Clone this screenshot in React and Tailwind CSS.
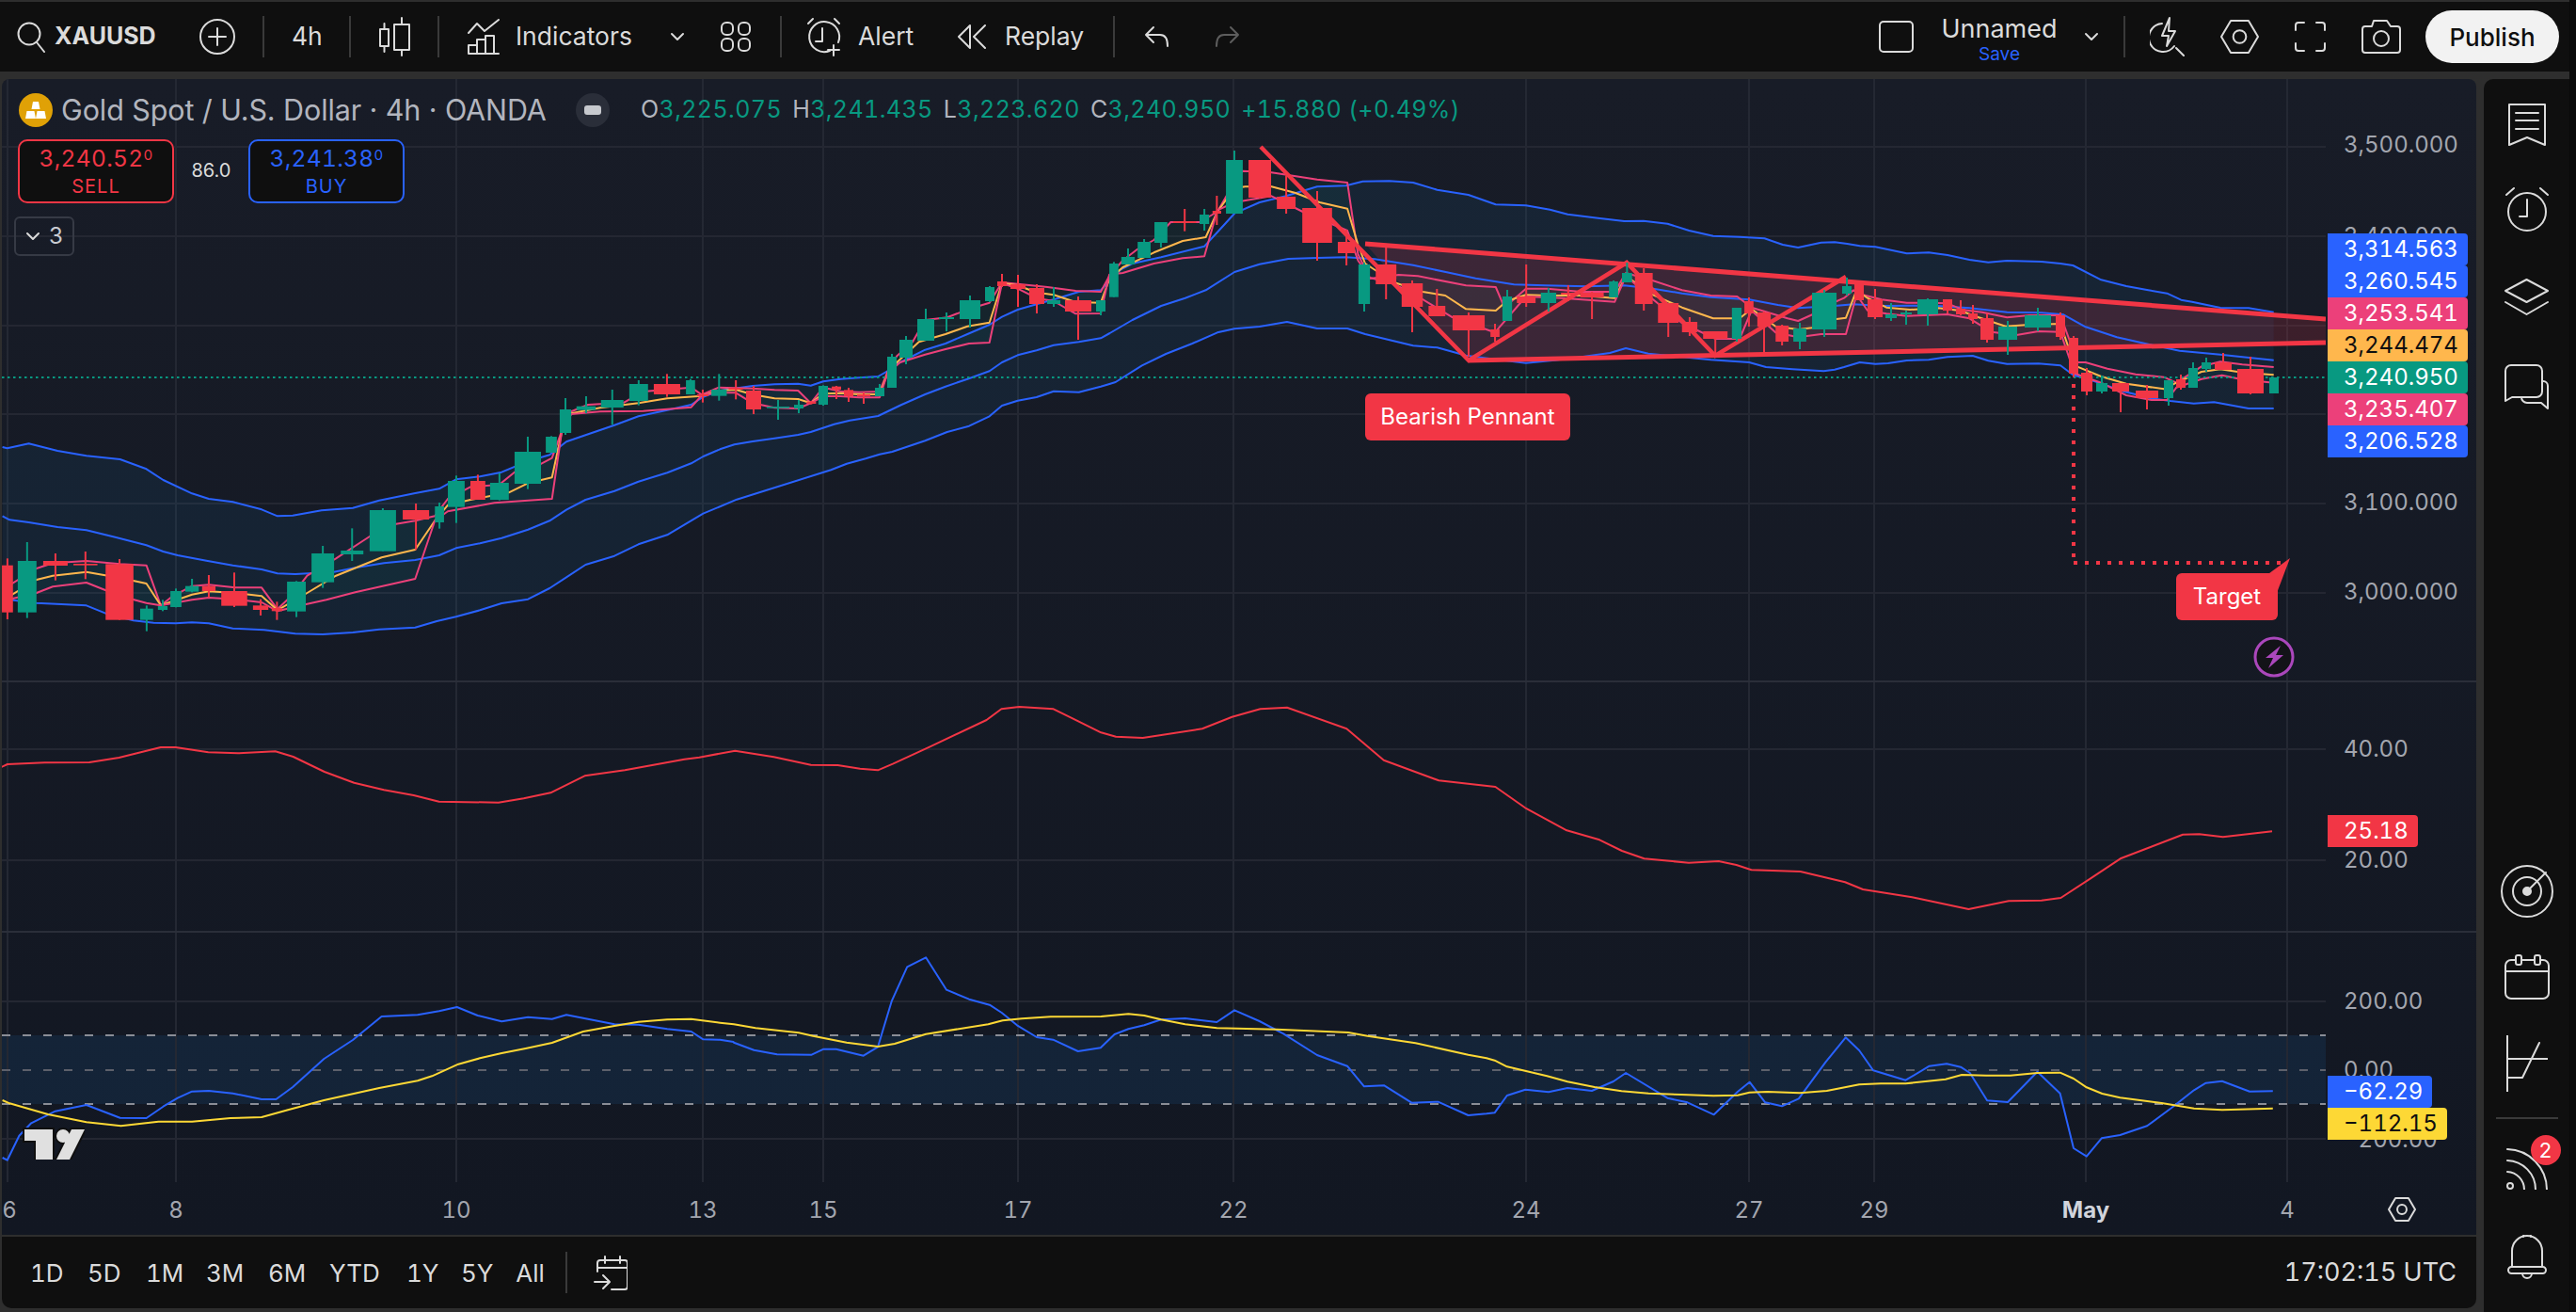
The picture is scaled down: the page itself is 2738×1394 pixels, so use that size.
import React from "react";

const seg = (ox, oy, sx, sy, lo = -1e9, hi = 1e9) => (pts) =>
  pts.map(([x, y]) => [ox + x / sx, oy + y / sy]).filter(([X]) => X >= lo && X < hi);
const z7 = seg(0, 380, 1.96, 3, -1e9, 790);
const z9 = seg(780, 260, 3, 3, 790, 1176);
const z6 = seg(1150, 130, 1.96, 3, 1176, 1945);
const z8 = seg(1950, 250, 3, 3, 1945);
const join4 = (a, b, c, d) => [...z7(a), ...z9(b), ...z6(c), ...z8(d)];
const P = (pts) => pts.map(([x, y]) => `${x.toFixed(1)},${y.toFixed(1)}`).join(" ");

const top = join4(
  [[5,285],[15,289],[60,274],[120,297],[180,313],[250,324],[305,355],[340,390],[400,433],[435,450],[485,460],[545,484],[578,505],[610,503],[670,487],[735,479],[790,455],[865,432],[915,418],[950,388],[1000,379],[1045,365],[1100,330],[1145,310],[1180,268],[1220,247],[1280,215],[1330,187],[1390,167],[1440,150],[1465,125],[1500,105],[1568,93]],
  [[60,450],[130,445],[205,443],[245,449],[285,436],[340,428],[400,424],[460,420],[495,400],[520,380],[560,360],[610,335],[675,315],[745,285],[815,255],[855,230],[905,207],[965,190],[1030,172],[1100,150],[1170,145],[1200,115]],
  [[57,505],[80,470],[105,450],[165,430],[255,395],[282,350],[318,290],[370,255],[425,235],[490,205],[550,202],[585,188],[640,187],[690,192],[740,215],[805,231],[862,262],[925,265],[975,278],[1012,293],[1075,305],[1130,315],[1170,314],[1220,323],[1265,345],[1315,362],[1370,365],[1422,370],[1460,390],[1492,399],[1540,383],[1568,383]],
  [[0,22],[40,27],[80,34],[130,37],[230,58],[300,55],[360,63],[430,78],[490,86],[550,81],[660,84],[720,90],[760,96],[850,142],[930,162],[1000,175],[1060,185],[1105,206],[1140,212],[1230,231],[1320,232],[1400,245]]
);
const mid = join4(
  [[5,505],[20,517],[60,525],[120,540],[180,550],[240,572],[305,598],[340,618],[370,630],[430,647],[485,662],[545,675],[578,688],[615,690],[695,683],[740,670],[800,655],[865,645],[915,630],[950,607],[1000,592],[1045,575],[1100,548],[1145,520],[1180,485],[1220,453],[1280,425],[1330,395],[1390,367],[1440,337],[1465,315],[1500,292],[1530,277],[1568,267]],
  [[60,627],[130,617],[205,606],[245,597],[320,572],[370,560],[460,546],[535,510],[610,477],[675,452],[745,428],[815,403],[855,375],[905,352],[965,337],[1020,320],[1100,310],[1170,298],[1200,282]],
  [[58,672],[105,630],[165,585],[215,560],[258,535],[318,477],[370,452],[430,435],[490,432],[550,430],[610,436],[690,455],[760,478],[820,497],[900,517],[965,520],[1050,523],[1130,520],[1190,530],[1250,545],[1310,557],[1390,565],[1450,582],[1492,592],[1568,590]],
  [[0,225],[60,220],[150,225],[250,224],[340,226],[430,232],[550,245],[660,247],[730,253],[800,292],[900,325],[1000,347],[1100,368],[1230,380],[1300,388],[1400,398]]
);
const bot = join4(
  [[5,772],[20,772],[76,782],[180,790],[220,815],[278,838],[320,845],[366,847],[400,844],[435,847],[485,863],[550,868],[615,880],[672,882],[735,876],[790,866],[865,860],[910,840],[950,826],[1000,805],[1045,783],[1100,770],[1145,735],[1180,700],[1220,660],[1280,632],[1330,595],[1390,565],[1465,497],[1535,452],[1568,442]],
  [[310,718],[360,698],[420,682],[465,668],[505,660],[610,625],[680,597],[750,578],[815,547],[855,513],[905,497],[965,486],[1020,467],[1100,470],[1170,452],[1200,442]],
  [[59,833],[70,828],[125,775],[175,738],[230,705],[282,670],[318,658],[370,651],[427,636],[490,657],[553,657],[590,675],[690,712],[740,718],[800,743],[860,755],[925,767],[985,758],[1040,748],[1100,735],[1133,720],[1180,737],[1250,748],[1310,757],[1390,765],[1425,780],[1480,787],[1545,793],[1568,785]],
  [[0,428],[30,420],[80,405],[130,410],[170,408],[230,399],[300,397],[360,388],[440,384],[490,400],[550,410],[650,409],[720,415],[760,445],[830,466],[920,497],[1010,520],[1070,528],[1145,536],[1210,532],[1320,552],[1400,552]]
);
const bandTop = top.filter(([X]) => X < 2417.5);
const bandBot = bot.filter(([X]) => X < 2417.5);
const pinkU = join4(
  [[20,725],[76,672],[110,655],[180,648],[250,658],[305,662],[335,790],[360,760],[400,728],[435,724],[490,733],[545,733],[578,802],[610,755],[640,695],[700,640],[770,570],[825,530],[865,520],[906,505],[933,450],[980,412],[1040,405],[1072,365],[1125,340],[1150,320],[1170,235],[1190,172],[1225,150],[1300,143],[1340,108],[1440,95],[1462,118],[1497,95],[1533,97]],
  [[60,458],[130,463],[205,465],[245,505],[285,455],[340,467],[400,470],[465,468],[490,405],[520,355],[570,310],[610,240],[680,232],[750,205],[815,185],[855,120],[905,125],[1000,135],[1090,147],[1170,150],[1200,110]],
  [[57,490],[85,440],[115,405],[150,375],[185,318],[245,318],[282,285],[318,190],[335,155],[395,160],[490,182],[553,192],[575,420],[600,498],[660,486],[700,490],[800,520],[862,525],[880,590],[925,530],[970,530],[1040,540],[1110,540],[1133,480],[1190,505],[1250,535],[1310,552],[1365,555],[1395,590],[1470,625],[1492,633],[1540,600]],
  [[0,213],[30,200],[60,175],[90,190],[150,205],[230,215],[300,215],[360,217],[410,238],[470,245],[550,262],[620,255],[720,255],[775,405],[800,405],[870,425],[960,443],[1050,452],[1090,470],[1170,418],[1230,403],[1300,412],[1400,420]]
);
const orange = join4(
  [[20,760],[76,708],[110,695],[180,683],[250,702],[305,720],[335,790],[400,755],[435,745],[490,750],[545,760],[578,805],[640,750],[700,695],[795,637],[865,612],[906,520],[933,470],[980,453],[1060,430],[1100,400],[1150,382],[1170,240],[1190,178],[1250,160],[1330,145],[1390,130],[1462,122],[1497,105],[1533,102]],
  [[60,478],[130,490],[205,492],[245,505],[285,475],[340,473],[400,477],[465,477],[490,410],[520,375],[590,310],[675,285],[745,260],[815,248],[855,122],[905,130],[965,152],[1020,160],[1090,183],[1170,185],[1200,130]],
  [[57,500],[85,462],[150,415],[210,378],[258,366],[282,285],[318,210],[340,205],[395,205],[445,225],[495,255],[553,275],[575,390],[590,450],[650,510],[710,540],[757,552],[800,595],[862,600],[885,570],[925,550],[970,552],[1040,552],[1110,560],[1133,490],[1190,550],[1250,590],[1315,625],[1370,625],[1395,595],[1445,650],[1492,660],[1521,655]],
  [[0,268],[36,263],[70,175],[105,200],[165,230],[240,237],[330,232],[400,240],[460,262],[545,290],[620,285],[720,282],[765,415],[850,450],[930,473],[1050,490],[1090,470],[1170,435],[1230,427],[1300,437],[1400,445]]
);
const pinkL = join4(
  [[20,770],[76,750],[110,730],[180,717],[250,760],[305,782],[335,790],[400,772],[435,765],[490,770],[545,780],[578,808],[640,785],[680,772],[740,748],[865,705],[906,520],[933,490],[1030,463],[1150,450],[1170,240],[1190,180],[1250,172],[1340,170],[1440,158],[1462,120],[1497,112],[1533,112]],
  [[60,505],[130,520],[205,522],[245,505],[285,483],[340,483],[400,487],[465,487],[490,410],[530,375],[610,350],[675,333],[750,315],[815,312],[855,122],[905,140],[965,170],[1020,180],[1090,220],[1170,219],[1200,150]],
  [[57,485],[85,480],[150,450],[210,433],[255,427],[282,280],[318,255],[395,235],[460,285],[553,345],[575,440],[600,495],[650,515],[700,555],[770,620],[860,670],[925,555],[1000,560],[1110,572],[1133,490],[1190,565],[1250,640],[1320,690],[1370,690],[1395,600],[1445,670],[1492,685],[1540,675]],
  [[0,315],[36,315],[70,190],[105,240],[165,250],[230,257],[360,252],[430,265],[500,308],[580,318],[650,306],[720,308],[765,440],[850,470],[930,510],[1010,525],[1060,525],[1090,485],[1170,458],[1235,446],[1300,460],[1400,470]]
);

const mapC = (ox, oy, sx, sy, list) =>
  list.map(([a, b, t, bt, wt, wb, c]) => ({
    x: ox + a / sx, w: (b - a) / sx, t: oy + t / sy, h: (bt - t) / sy,
    cx: ox + (a + b) / 2 / sx, wt: oy + wt / sy, wb: oy + wb / sy, c,
  }));
const G = "#089981", R = "#f23645";
const candles = [
  ...mapC(0, 380, 1.96, 3, [
    [4,27,662,812,640,834,R],[37,76,648,812,588,830,G],[90,141,648,663,624,710,R],[153,203,657,662,618,706,R],
    [220,278,658,836,642,836,R],[292,319,800,836,790,872,G],[329,349,792,804,772,808,G],[355,378,744,795,736,796,G],
    [386,414,728,746,705,748,G],[421,449,728,744,693,765,R],[461,515,744,791,685,795,R],[527,559,790,804,770,822,R],
    [566,588,798,808,778,836,R],[598,637,714,809,712,827,G],[649,696,624,716,600,734,G],[710,757,615,627,544,648,G],
    [770,825,486,617,480,617,G],[839,894,486,516,465,613,R],[906,925,474,525,462,545,G],[933,968,393,476,376,527,G],
    [980,1011,393,453,373,453,R],[1021,1060,399,453,368,455,G],[1072,1127,300,402,252,419,G],[1137,1160,252,303,250,303,G],
    [1166,1190,165,240,129,246,G],[1201,1241,155,167,123,177,G],[1252,1299,135,159,102,214,G],[1311,1350,84,138,72,152,G],
    [1362,1417,84,117,52,125,R],[1429,1448,72,117,68,117,G],[1452,1476,117,123,102,143,R],[1482,1514,102,122,52,137,G],
    [1518,1548,96,102,72,133,R],
  ]),
  ...mapC(780, 260, 3, 3, [
    [39,87,465,525,450,540,R],[105,177,516,521,495,558,G],[192,222,510,522,495,537,G],[232,262,500,507,498,509,R],
    [270,300,450,510,448,513,G],[312,342,452,462,450,492,R],[351,381,463,483,456,501,R],[393,435,477,483,470,507,R],
    [450,480,456,483,444,483,G],[489,519,357,456,348,456,G],[528,570,303,360,291,381,G],[585,639,237,306,204,306,G],
    [654,702,231,237,216,276,G],[720,786,177,237,162,264,G],[801,831,135,180,132,183,G],[840,870,117,132,93,135,R],
    [882,930,126,141,96,198,R],[942,990,138,189,126,219,R],[999,1041,177,189,135,198,G],[1056,1140,177,213,165,303,R],
    [1155,1185,177,213,177,225,G],
  ]),
  ...mapC(1150, 130, 1.96, 3, [
    [57,76,450,557,445,557,G],[82,110,429,453,402,453,G],[116,143,381,432,372,432,G],[151,178,318,384,318,399,G],
    [190,238,315,321,276,347,R],[245,265,294,324,276,345,G],[272,290,282,291,234,327,R],[300,335,120,291,90,291,G],
    [347,394,120,240,120,243,R],[406,445,237,276,170,291,R],[459,521,273,384,219,441,R],[533,569,381,417,342,456,R],
    [576,600,453,579,447,603,G],[612,655,453,516,399,564,R],[666,710,513,588,504,669,R],[722,757,585,618,531,618,R],
    [772,839,615,663,606,747,R],[851,870,660,684,642,699,R],[876,896,555,633,534,633,G],[906,945,555,576,453,588,R],
    [956,988,543,576,528,603,G],[998,1028,543,549,519,570,R],[1038,1087,543,558,540,627,R],[1098,1117,507,558,504,558,G],
    [1125,1146,480,510,447,510,G],[1152,1189,480,579,465,600,R],[1200,1243,576,639,576,684,R],[1250,1282,636,669,621,681,R],
    [1294,1345,666,690,666,738,R],[1354,1374,591,690,591,699,G],[1380,1399,570,609,558,651,R],[1407,1435,606,651,603,735,R],
    [1445,1472,648,699,645,711,R],[1482,1509,657,699,639,723,G],[1521,1572,543,660,534,684,G],
  ]),
  ...mapC(1950, 250, 3, 3, [
    [24,54,162,186,135,192,G],[63,93,153,207,150,207,R],[105,153,204,261,171,267,R],[162,198,252,264,216,273,G],
    [210,246,246,252,240,285,G],[264,330,204,252,201,288,G],[345,375,204,240,204,249,R],[387,417,234,252,207,255,R],
    [426,456,249,267,222,282,R],[465,507,264,333,249,342,R],[522,582,291,333,273,381,G],[606,690,255,294,231,306,G],
    [705,735,255,324,246,333,R],[747,777,327,441,321,453,R],[786,822,438,498,423,510,R],[834,870,471,498,447,504,G],
    [885,939,471,498,471,564,R],[960,1032,495,519,477,555,R],[1050,1080,462,519,462,543,G],[1089,1119,459,486,444,492,R],
    [1128,1158,423,486,405,486,G],[1170,1200,405,426,390,435,G],[1212,1266,405,429,375,429,R],[1284,1368,426,504,387,507,R],
    [1386,1416,453,504,453,504,G],
  ]),
];

const rsi = [[0,257],[5,246],[30,241],[60,240],[80,225],[108,192],[118,192],[140,208],[160,211],[185,205],[197,222],[218,270],[238,305],[258,328],[278,345],[295,365],[335,368],[352,355],[370,337],[393,283],[420,265],[460,230],[470,224],[494,203],[520,223],[545,248],[563,249],[578,260],[590,265],[600,245],[625,190],[663,105],[673,70],[685,63],[708,70],[740,145],[750,158],[768,162],[808,133],[828,95],[847,70],[865,65],[905,133],[930,233],[967,298],[1005,318],[1025,385],[1053,457],[1075,487],[1090,522],[1105,547],[1135,560],[1155,555],[1167,567],[1177,583],[1210,588],[1240,622],[1252,645],[1285,670],[1323,708],[1350,682],[1372,680],[1385,672],[1405,610],[1425,547],[1467,470],[1478,469],[1494,478],[1527,460]]
  .map(([x, y]) => [x / 0.6323, 730 + y / 3]);

const c5 = seg(0, 1060, 1.96, 3, -1e9, 780);
const c11 = seg(780, 1000, 1.96, 3, 780, 1580);
const c12 = seg(1580, 1060, 1.742, 3, 1580);
const cciBlue = [
  ...c5([[5,510],[15,518],[40,440],[65,400],[115,362],[180,342],[250,383],[305,384],[340,347],[370,320],[400,299],[435,297],[485,305],[545,324],[575,324],[610,285],[675,195],[735,135],[795,60],[870,55],[915,43],[952,30],[995,57],[1045,76],[1100,62],[1150,68],[1180,55],[1280,85],[1330,86],[1390,100],[1440,108],[1465,133],[1500,134],[1528,141]]),
  ...c11([[0,323],[42,347],[90,361],[162,362],[187,344],[213,344],[270,365],[300,337],[329,190],[361,82],[400,52],[443,155],[490,185],[533,203],[558,228],[590,268],[631,306],[665,314],[717,351],[764,340],[793,297],[822,280],[855,268],[890,250],[940,246],[1006,258],[1043,220],[1095,255],[1145,295],[1215,363],[1278,398],[1313,463],[1355,460],[1412,515],[1467,512],[1530,555]]),
  ...c12([[0,370],[15,367],[38,312],[72,293],[115,301],[150,288],[195,297],[235,267],[258,240],[335,320],[372,334],[421,373],[465,300],[487,269],[516,334],[547,346],[578,322],[628,205],[665,127],[690,168],[716,232],[776,263],[820,218],[852,211],[878,221],[895,240],[927,328],[965,333],[1020,236],[1062,305],[1087,480],[1111,506],[1139,448],[1173,438],[1223,409],[1268,352],[1310,295],[1332,272],[1362,266],[1413,299],[1456,298]]),
];
const cciYellow = [
  ...c5([[5,327],[20,337],[100,372],[180,397],[252,409],[330,395],[400,395],[480,384],[545,381],[600,358],[675,327],[790,288],[870,265],[900,250],[955,212],[1000,193],[1045,177],[1095,162],[1150,144],[1215,108],[1280,90],[1330,77],[1390,70],[1440,68],[1500,80]]),
  ...c11([[0,265],[45,277],[135,292],[165,302],[235,323],[300,336],[335,327],[400,296],[530,265],[560,253],[600,247],[660,241],[765,240],[822,232],[855,237],[890,250],[940,265],[1006,277],[1130,281],[1280,291],[1320,302],[1420,325],[1530,362]]),
  ...c12([[0,193],[15,200],[38,220],[112,250],[150,268],[200,285],[250,298],[300,305],[360,309],[420,313],[465,311],[487,302],[520,300],[580,304],[630,297],[690,277],[730,274],[776,274],[850,260],[880,246],[925,248],[970,248],[1020,240],[1062,239],[1087,258],[1111,286],[1140,306],[1173,319],[1250,336],[1310,353],[1362,358],[1456,353]]),
];

const vGrid = [8, 187, 485, 747, 875, 1082, 1311, 1622, 1859, 1992, 2217, 2431];
const VLines = ({ y1, y2 }) =>
  vGrid.map((x) => <line key={x} x1={x} x2={x} y1={y1} y2={y2} stroke="#242833" strokeWidth="2" />);
const HLine = ({ y }) => <line x1="2" x2="2472" y1={y} y2={y} stroke="#242732" strokeWidth="2" />;
const Poly = ({ pts, color, w = 2 }) => (
  <polyline points={P(pts)} fill="none" stroke={color} strokeWidth={w} strokeLinejoin="round" />
);

const Ic = ({ w, h, children, className = "" }) => (
  <svg width={w} height={h} viewBox={`0 0 ${w} ${h}`} fill="none" stroke="#dbdbdb" strokeWidth="2" strokeLinecap="round" strokeLinejoin="round" className={`shrink-0 ${className}`}>
    {children}
  </svg>
);
const Sep = ({ className }) => <div className={`w-[2px] h-[44px] bg-[#3a3a3a] shrink-0 ${className}`} />;
const Chevron = ({ className }) => (
  <Ic w={16} h={10} className={className}><path d="M2 2l6 6 6-6" /></Ic>
);
const Hex = ({ w, h }) => (
  <Ic w={w} h={h}>
    <polygon points={`1,${h / 2} ${w * 0.27},1 ${w * 0.73},1 ${w - 1},${h / 2} ${w * 0.73},${h - 1} ${w * 0.27},${h - 1}`} />
    <circle cx={w / 2} cy={h / 2} r={h * 0.19} />
  </Ic>
);

function TopBar() {
  return (
    <div className="h-[74px] mt-[2px] bg-[#0f0f0f] flex items-center pl-[18px] pr-[11px] text-[#dbdbdb] text-[26.5px]">
      <Ic w={30} h={34}><circle cx="13" cy="14" r="11.5" /><path d="M21 23l8 10" /></Ic>
      <div className="ml-[10px] w-[118px] font-bold text-[25px] whitespace-nowrap">XAUUSD</div>
      <Ic w={38} h={38} className="ml-[36px]"><circle cx="19" cy="19" r="18" /><path d="M19 10v18M10 19h18" /></Ic>
      <Sep className="ml-[29px]" />
      <div className="ml-[29px] w-[31px] whitespace-nowrap">4h</div>
      <Sep className="ml-[30px]" />
      <Ic w={33} h={42} className="ml-[30px]">
        <rect x="1" y="13" width="9" height="18" /><path d="M5.5 7v6M5.5 31v6" />
        <rect x="16" y="8" width="16" height="27" /><path d="M24 1v7M24 35v6" />
      </Ic>
      <Sep className="ml-[29px]" />
      <Ic w={34} h={38} className="ml-[30px]">
        <path d="M1 15L10 5l8 8L33 1" />
        <path d="M1 37V28h9v9M10 37V22h9v15M19 37V18h9v19M1 37h32" />
      </Ic>
      <div className="ml-[17px] w-[127px] whitespace-nowrap">Indicators</div>
      <Chevron className="ml-[37px]" />
      <Ic w={32} h={32} className="ml-[38px]">
        <rect x="1" y="1" width="12" height="13" rx="5" /><rect x="19" y="1" width="12" height="13" rx="5" />
        <rect x="1" y="18" width="12" height="13" rx="5" /><rect x="19" y="18" width="12" height="13" rx="5" />
      </Ic>
      <Sep className="ml-[31px]" />
      <Ic w={39} h={42} className="ml-[25px]">
        <path d="M26 36a16 16 0 1 1 9-9" /><path d="M18 12v14h-7" /><path d="M3 7l5-5M31 2l5 5" /><path d="M30 30v11M24 35h12" />
      </Ic>
      <div className="ml-[17px] w-[60px] whitespace-nowrap">Alert</div>
      <Ic w={30} h={28} className="ml-[46px]">
        <path d="M13 2L1 14l12 12zM29 2L17 14l12 12" />
      </Ic>
      <div className="ml-[20px] w-[85px] whitespace-nowrap">Replay</div>
      <Sep className="ml-[30px]" />
      <Ic w={27} h={24} className="ml-[31px]"><path d="M10 2L2 10l8 8M2 10h15c6 0 8 5 8 12" /></Ic>
      <svg width="26" height="24" viewBox="0 0 26 24" fill="none" stroke="#5d5d5d" strokeWidth="2" strokeLinecap="round" strokeLinejoin="round" className="ml-[49px] shrink-0"><path d="M16 2l8 8-8 8M24 10H9c-6 0-8 5-8 12" /></svg>
      <div className="flex-1" />
      <div className="w-[37px] h-[34px] rounded-[5px] border-2 border-[#dbdbdb] shrink-0" />
      <div className="ml-[29px] w-[124px] flex flex-col items-center leading-none">
        <div className="whitespace-nowrap text-[27px] mt-[5px]">Unnamed</div>
        <div className="text-[19px] text-[#2962ff] mt-[4px]">Save</div>
      </div>
      <Chevron className="ml-[28px]" />
      <Sep className="ml-[26px]" />
      <Ic w={37} h={42} className="ml-[26px]">
        <path d="M13 7a15 15 0 1 0 13 24M28 33l8 8" /><path d="M21 1L13 20h7l-2 11 9-16h-7z" />
      </Ic>
      <div className="ml-[38px] shrink-0"><Hex w={41} h={36} /></div>
      <Ic w={33} h={32} className="ml-[38px]">
        <path d="M1 9V4a3 3 0 0 1 3-3h6M23 1h6a3 3 0 0 1 3 3v5M32 23v5a3 3 0 0 1-3 3h-6M10 31H4a3 3 0 0 1-3-3v-5" />
      </Ic>
      <Ic w={42} h={36} className="ml-[38px]">
        <path d="M1 10a3 3 0 0 1 3-3h7l2-6h14l4 6h7a3 3 0 0 1 3 3v22a3 3 0 0 1-3 3H4a3 3 0 0 1-3-3z" />
        <circle cx="21" cy="20" r="8" />
      </Ic>
      <div className="ml-[26px] w-[142px] h-[56px] rounded-full bg-[#f2f2f2] text-[#0f0f0f] flex items-center justify-center text-[26px] font-medium">Publish</div>
    </div>
  );
}

const Tag = ({ y, bg, fg = "text-white", text, pr = "pr-[10px]" }) => (
  <div className={`absolute left-[2px] h-[34px] flex items-center pl-[17px] rounded-r-[4px] text-[24px] tabular-nums whitespace-nowrap ${bg} ${fg} ${pr}`} style={{ top: y }}>
    {text}
  </div>
);
const AxisT = ({ y, text }) => (
  <div className="absolute left-[19px] -translate-y-1/2 text-[24px] tabular-nums text-[#a3a6af] whitespace-nowrap" style={{ top: y }}>
    {text}
  </div>
);

function PricePane() {
  return (
    <div className="h-[639px] flex">
      <div className="relative w-[2470px]">
        <svg viewBox="2 84 2470 639" width="2470" height="639" className="block">
          <VLines y1={84} y2={723} />
          {[156, 251, 346, 440, 535, 630].map((y) => <HLine key={y} y={y} />)}
          <polygon points={P([...bandTop, ...[...bandBot].reverse()])} fill="#2196f3" fillOpacity="0.07" />
          <polygon points={P([...pinkU, ...[...pinkL].reverse()])} fill="#089981" fillOpacity="0.07" />
          <polygon points="1451,259 2472,339 2472,364 1561,383" fill="#f23645" fillOpacity="0.17" />
          <Poly pts={top} color="#2962ff" /><Poly pts={mid} color="#2962ff" /><Poly pts={bot} color="#2962ff" />
          <Poly pts={pinkU} color="#ec407a" /><Poly pts={orange} color="#ffb74d" /><Poly pts={pinkL} color="#ec407a" />
          <line x1="2" x2="2472" y1="401" y2="401" stroke="#089981" strokeWidth="2" strokeDasharray="2.5 3.5" />
          <line x1="1451" y1="259" x2="2472" y2="339" stroke="#f23645" strokeWidth="5" />
          <line x1="1561" y1="383" x2="2472" y2="364" stroke="#f23645" strokeWidth="5" />
          <polyline points="1340,156 1561,383 1729,279 1823,378 1962,294" fill="none" stroke="#f23645" strokeWidth="4.5" strokeLinejoin="miter" />
          <line x1="2204" y1="408" x2="2204" y2="598" stroke="#f23645" strokeWidth="4" strokeDasharray="4 8" />
          <line x1="2204" y1="598" x2="2424" y2="598" stroke="#f23645" strokeWidth="4" strokeDasharray="4 8" />
          {candles.map((c, i) => (
            <g key={i} fill={c.c}>
              <rect x={c.cx - 1} y={c.wt} width="2" height={Math.max(0, c.wb - c.wt)} />
              <rect x={c.x} y={c.t} width={c.w} height={c.h} />
            </g>
          ))}
          <polygon points="2408,612 2434,593 2420,630" fill="#f23645" />
          <circle cx="2417" cy="698" r="20" fill="#131318" stroke="#ab47bc" strokeWidth="3" />
          <path d="M2424 686l-16 13h8l-5 11 16-14h-8z" fill="#ab47bc" />
        </svg>
        <div className="absolute left-[1449px] top-[334px] w-[218px] h-[50px] rounded-[6px] bg-[#f23645] text-white text-[24px] flex items-center justify-center whitespace-nowrap">Bearish Pennant</div>
        <div className="absolute left-[2311px] top-[525px] w-[108px] h-[50px] rounded-[6px] bg-[#f23645] text-white text-[24px] flex items-center justify-center">Target</div>
        <div className="absolute left-[18px] top-[15px] flex items-center h-[36px] whitespace-nowrap">
          <svg width="36" height="36" viewBox="0 0 36 36" className="shrink-0">
            <circle cx="18" cy="18" r="18" fill="#e0a106" />
            <path d="M15 9h6l1.5 8h-9zM8.5 19h8l1.500 8H7zM19.500 19h8l1.500 8H18z" fill="#fff" />
          </svg>
          <div className="ml-[9px] w-[517px] text-[30.500px] tracking-[-0.1px] text-[#b2b5be]">Gold Spot / U.S. Dollar · 4h · OANDA</div>
          <div className="ml-[30px] w-[36px] h-[36px] rounded-full bg-[#2a2e39] flex items-center justify-center shrink-0">
            <div className="w-[18px] h-[10px] rounded-[3px] bg-[#c7c9ce]" />
          </div>
          <div className="ml-[33px] text-[25px] tracking-[0.4px] text-[#089981] tabular-nums">
            <span className="text-[#b2b5be]">O</span>3,225.075 <span className="ml-[4px] text-[#b2b5be]">H</span>3,241.435 <span className="ml-[4px] text-[#b2b5be]">L</span>3,223.620 <span className="ml-[4px] text-[#b2b5be]">C</span>3,240.950 <span className="ml-[4px]">+15.880 (+0.49%)</span>
          </div>
        </div>
        <div className="absolute left-[17px] top-[64px] flex items-center">
          <div className="w-[166px] h-[68px] rounded-[10px] border-2 border-[#f23645] bg-[#0f0f0f] flex flex-col items-center justify-center text-[#f23645] leading-none">
            <div className="text-[24.500px] tabular-nums tracking-[0.3px]">3,240.52<sup className="text-[15px]">0</sup></div>
            <div className="text-[20px] mt-[7px] tracking-[1px]">SELL</div>
          </div>
          <div className="w-[79px] text-center text-[20px] text-[#dbdbdb] mt-[-2px]">86.0</div>
          <div className="w-[166px] h-[68px] rounded-[10px] border-2 border-[#2962ff] bg-[#0f0f0f] flex flex-col items-center justify-center text-[#2962ff] leading-none">
            <div className="text-[24.500px] tabular-nums tracking-[0.3px]">3,241.38<sup className="text-[15px]">0</sup></div>
            <div className="text-[20px] mt-[7px] tracking-[1px]">BUY</div>
          </div>
        </div>
        <div className="absolute left-[13px] top-[146px] w-[64px] h-[42px] rounded-[6px] border-2 border-[#363a45] flex items-center justify-center gap-[9px] text-[24px] text-[#c8cad0]">
          <Chevron />
          <span>3</span>
        </div>
      </div>
      <div className="relative w-[160px]">
        <AxisT y={70} text="3,500.000" />
        <AxisT y={167} text="3,400.000" />
        <AxisT y={450} text="3,100.000" />
        <AxisT y={545} text="3,000.000" />
        <Tag y={164} bg="bg-[#2962ff]" text="3,314.563" />
        <Tag y={198} bg="bg-[#2962ff]" text="3,260.545" />
        <Tag y={232} bg="bg-[#ec407a]" text="3,253.541" />
        <Tag y={266} bg="bg-[#ffb74d]" fg="text-[#0f0f0f]" text="3,244.474" />
        <Tag y={300} bg="bg-[#089981]" text="3,240.950" />
        <Tag y={334} bg="bg-[#ec407a]" text="3,235.407" />
        <Tag y={368} bg="bg-[#2962ff]" text="3,206.528" />
      </div>
    </div>
  );
}

function RsiPane() {
  return (
    <div className="h-[264px] flex">
      <div className="w-[2470px]">
        <svg viewBox="2 725 2470 264" width="2470" height="264" className="block">
          <VLines y1={725} y2={989} />
          <HLine y={796} /><HLine y={914} />
          <Poly pts={rsi} color="#f23645" />
        </svg>
      </div>
      <div className="relative w-[160px]">
        <AxisT y={71} text="40.00" />
        <AxisT y={189} text="20.00" />
        <Tag y={141} bg="bg-[#f23645]" text="25.18" />
      </div>
    </div>
  );
}

function CciPane() {
  return (
    <div className="h-[265px] flex">
      <div className="relative w-[2470px]">
        <svg viewBox="2 991 2470 265" width="2470" height="265" className="block">
          <rect x="2" y="1100" width="2470" height="73" fill="#2196f3" fillOpacity="0.1" />
          <VLines y1={991} y2={1256} />
          <HLine y={1064} /><HLine y={1210} />
          <line x1="2" x2="2472" y1="1100" y2="1100" stroke="#8a8d96" strokeWidth="2" strokeDasharray="9 13" />
          <line x1="2" x2="2472" y1="1137" y2="1137" stroke="#5d606b" strokeWidth="2" strokeDasharray="9 13" />
          <line x1="2" x2="2472" y1="1173" y2="1173" stroke="#8a8d96" strokeWidth="2" strokeDasharray="9 13" />
          <Poly pts={cciBlue} color="#2962ff" />
          <Poly pts={cciYellow} color="#fdd835" />
        </svg>
        <svg width="66" height="36" viewBox="0 0 66 36" className="absolute left-[22px] top-[205px]">
          <path d="M2 4h30v32H14V16H2zM52 4h14L50 36H36zM43 4a7 7 0 1 1 0 14 7 7 0 0 1 0-14z" fill="#e0e0e0" stroke="#0f0f0f" strokeWidth="4" paintOrder="stroke" />
        </svg>
      </div>
      <div className="relative w-[160px]">
        <AxisT y={73} text="200.00" />
        <AxisT y={146} text="0.00" />
        <AxisT y={220} text="−200.00" />
        <Tag y={152} bg="bg-[#2962ff]" text="−62.29" />
        <Tag y={186} bg="bg-[#fdd835]" fg="text-[#0f0f0f]" text="−112.15" />
      </div>
    </div>
  );
}

const timeLabels = [["6", 10], ["8", 187], ["10", 485], ["13", 747], ["15", 875], ["17", 1082], ["22", 1311], ["24", 1622], ["27", 1859], ["29", 1992], ["May", 2217], ["4", 2431]];

function TimeAxis() {
  return (
    <div className="relative h-[56px]">
      {timeLabels.map(([t, x]) => (
        <div key={t} className={`absolute top-[16px] -translate-x-1/2 text-[24px] leading-[28px] tabular-nums ${t === "May" ? "font-bold text-[#d1d4dc]" : "text-[#a3a6af]"}`} style={{ left: x - 2 }}>
          {t}
        </div>
      ))}
      <div className="absolute left-[2536px] top-[16px]"><Hex w={30} h={26} /></div>
    </div>
  );
}

function BottomBar() {
  const items = [
    ["1D", "ml-[30px] w-[34px]"], ["5D", "ml-[27px] w-[35px]"], ["1M", "ml-[27px] w-[38px]"], ["3M", "ml-[26px] w-[40px]"],
    ["6M", "ml-[26px] w-[39px]"], ["YTD", "ml-[26px] w-[53px]"], ["1Y", "ml-[29px] w-[31px]"], ["5Y", "ml-[27px] w-[32px]"], ["All", "ml-[26px] w-[31px]"],
  ];
  return (
    <div className="h-[76px] mt-[2px] bg-[#0f0f0f] rounded-b-[10px] flex items-center text-[26px] text-[#dbdbdb]">
      {items.map(([t, c]) => <div key={t} className={`${c} text-center whitespace-nowrap tabular-nums`}>{t}</div>)}
      <Sep className="ml-[22px]" />
      <Ic w={36} h={37} className="ml-[28px]">
        <path d="M4 17V8a3 3 0 0 1 3-3h26a3 3 0 0 1 3 3v25a3 3 0 0 1-3 3H19" /><path d="M4 13h32M12 1v7M28 1v7" />
        <path d="M1 28h15M10 21l7 7-7 7" />
      </Ic>
      <div className="flex-1" />
      <div className="mr-[21px] whitespace-nowrap tabular-nums text-[27px]">17:02:15 UTC</div>
    </div>
  );
}

function SideBar() {
  return (
    <div className="w-[91px] ml-[8px] bg-[#0f0f0f] rounded-tl-[10px] flex flex-col items-center">
      <Ic w={40} h={45} className="mt-[26px]"><path d="M1 1h38v43L20 36 1 44z" /><path d="M8 10h24M8 18h24M8 27h24" /></Ic>
      <Ic w={50} h={48} className="mt-[43px]">
        <circle cx="25" cy="27" r="20" /><path d="M25 14v18h-8" /><path d="M3 9l8-7M47 9l-8-7" />
      </Ic>
      <Ic w={47} h={39} className="mt-[50px]"><path d="M23.500 1L46 13 23.500 25 1 13z" /><path d="M1 25l22.500 13L46 25" /></Ic>
      <Ic w={47} h={49} className="mt-[51px]">
        <path d="M1 40V8a6 6 0 0 1 6-6h27a6 6 0 0 1 6 6v22a6 6 0 0 1-6 6H8z" />
        <path d="M41 19a5 5 0 0 1 5 5v24l-7-6H24a6 6 0 0 1-6-6" />
      </Ic>
      <Ic w={56} h={56} className="mt-[484px]">
        <circle cx="28" cy="28" r="27" /><circle cx="28" cy="28" r="15" /><circle cx="28" cy="28" r="4" fill="#dbdbdb" /><path d="M28 28l20-20" />
      </Ic>
      <Ic w={48} h={48} className="mt-[39px]">
        <rect x="1" y="6" width="46" height="41" rx="6" /><path d="M1 18h46" /><rect x="12" y="1" width="6" height="10" rx="2" fill="#0f0f0f" /><rect x="32" y="1" width="6" height="10" rx="2" fill="#0f0f0f" />
      </Ic>
      <Ic w={44} h={60} className="mt-[38px]"><path d="M1 0v60M1 25h43M1 45h16L35 8" /></Ic>
      <div className="w-[66px] h-[2px] bg-[#3a3a3a] mt-[27px]" />
      <div className="relative mt-[31px]">
        <Ic w={44} h={44}>
          <circle cx="4" cy="40" r="3" /><path d="M1 25A19 19 0 0 1 19 44M1 13A31 31 0 0 1 31 44M1 1A43 43 0 0 1 43 44" />
        </Ic>
        <div className="absolute -right-[14px] -top-[14px] w-[32px] h-[32px] rounded-full bg-[#f23645] text-white text-[22px] flex items-center justify-center">2</div>
      </div>
      <Ic w={42} h={47} className="mt-[48px]">
        <path d="M5 34V17a16 16 0 0 1 32 0v17" /><path d="M17 2a4 4 0 0 1 8 0" /><rect x="1" y="34" width="40" height="7" rx="3.500" /><path d="M16 41a5 5 0 0 0 10 0" />
      </Ic>
    </div>
  );
}

export default function App() {
  return (
    <div className="w-[2738px] h-[1394px] flex bg-[#090909] overflow-hidden font-['Inter',sans-serif]">
      <div className="w-[2731px] h-full bg-[#2e2e2e] flex flex-col">
        <TopBar />
        <div className="mt-[8px] flex flex-1 min-h-0">
          <div className="w-[2630px] ml-[2px] flex flex-col">
            <div className="rounded-t-[8px] bg-linear-to-b from-[#181c27] to-[#121722] overflow-hidden">
              <PricePane />
              <div className="h-[2px] bg-[#2a2e39]" />
              <RsiPane />
              <div className="h-[2px] bg-[#2a2e39]" />
              <CciPane />
              <TimeAxis />
            </div>
            <BottomBar />
          </div>
          <SideBar />
        </div>
      </div>
    </div>
  );
}
